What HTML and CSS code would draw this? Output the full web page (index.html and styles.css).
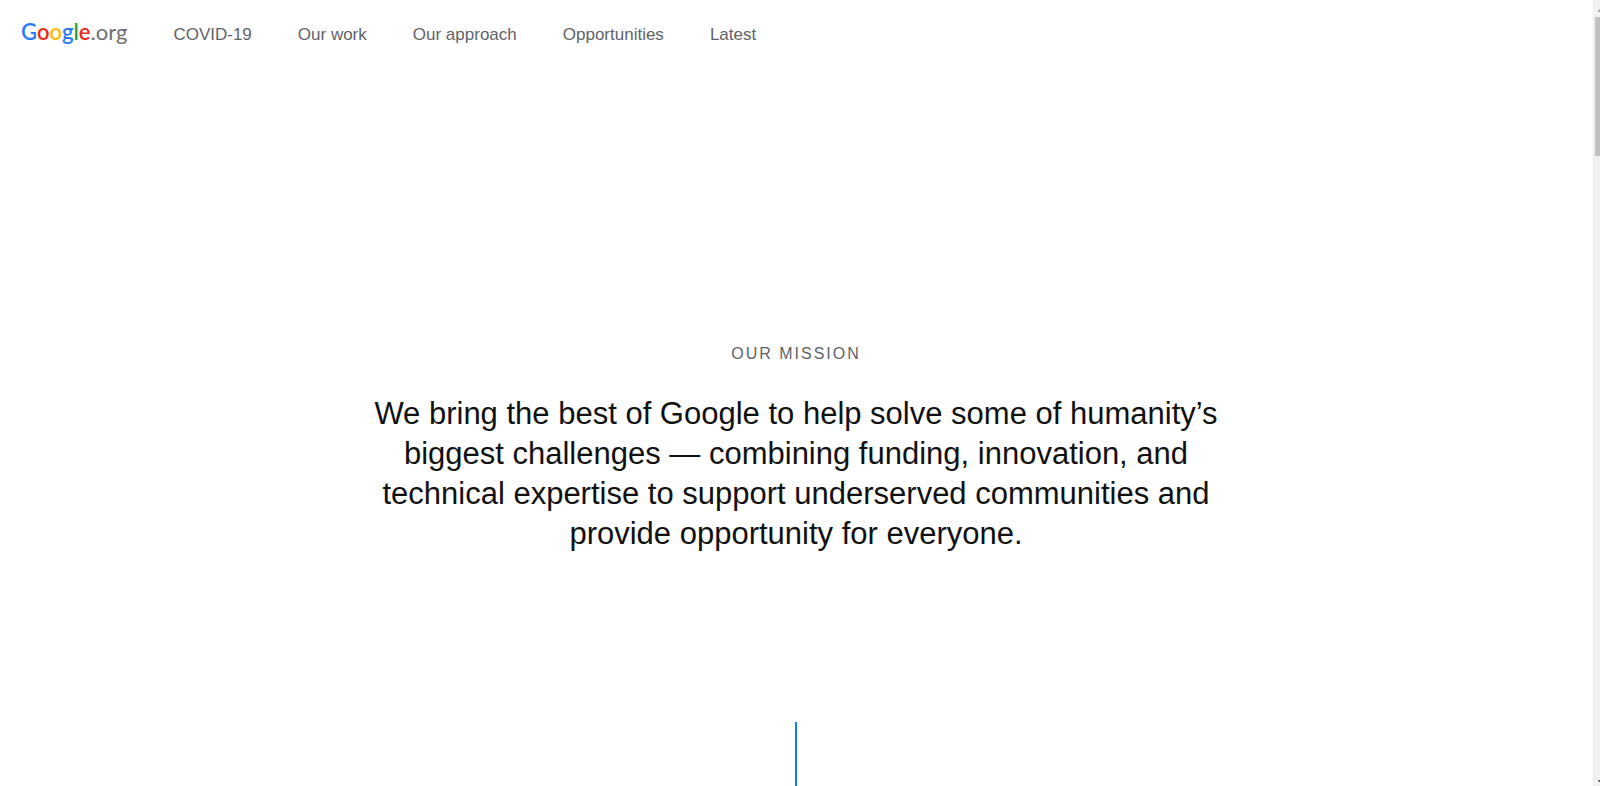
FILE: index.html
```
<!DOCTYPE html>
<html lang="en">
<head>
    <meta charset="UTF-8">
    <meta name="viewport" content="width=device-width, initial-scale=1.0">
    <title>Google.org</title>
    <link rel="stylesheet" href="styles.css">
</head>
<body>
    <div class="page">
        <header class="header">
            <a class="logo" href="#"><b><span class="blue">G</span><span class="red">o</span><span class="yellow">o</span><span class="blue">g</span><span class="green">l</span><span class="red">e</span></b>.org</a>
            <nav class="nav">
                <a href="#">COVID-19</a>
                <a href="#">Our work</a>
                <a href="#">Our approach</a>
                <a href="#">Opportunities</a>
                <a href="#">Latest</a>
            </nav>
        </header>
        <main class="mission">
            <h2 class="eyebrow">Our mission</h2>
            <p class="headline">We bring the best of Google to help solve some of humanity’s biggest challenges — combining funding, innovation, and technical expertise to support underserved communities and provide opportunity for everyone.</p>
            <div class="line"></div>
        </main>
    </div>

    <!-- scrollbar -->
    <div class="scrollbar">
        <svg width="5" height="17" viewBox="0 0 5 17"><path d="M5 9v3H3v-1z" fill="#a3a3a3"/></svg>
        <div class="thumb"></div>
        <svg class="down" width="5" height="17" viewBox="0 0 5 17"><path d="M3 11h2v2H4z" fill="#505050"/></svg>
    </div>
</body>
</html>
```
FILE: styles.css
```
body{
    margin: 0;
    display: flex;
    height: 100vh;
    overflow: hidden;
    background-color: #fff;
    font-family: "Liberation Sans", Arial, sans-serif;
}
a{
    text-decoration: none;
}
.page{
    flex: 1;
    display: flex;
    flex-direction: column;
}
.header{
    display: flex;
    align-items: center;
    height: 70px;
    padding: 0 21px;
    gap: 46px;
}
.logo{
    color: #6d6e71;
    font-family: Lato, sans-serif;
    font-size: 22px;
    line-height: 32px;
    padding-bottom: 6px;
}
.logo b{
    font-weight: 600;
}
.blue{
    color: #2a7bf6;
}
.red{
    color: #ea2a1c;
}
.yellow{
    color: #fbbc05;
}
.green{
    color: #22a64a;
}
.nav{
    display: flex;
    gap: 46px;
}
.nav a{
    color: #5f6368;
    font-size: 17px;
    line-height: 24px;
}
.mission{
    flex: 1;
    display: flex;
    flex-direction: column;
    align-items: center;
    padding-top: 272px;
    text-align: center;
}
.eyebrow{
    margin: 0 0 28px;
    color: #5f6368;
    font-size: 16px;
    font-weight: normal;
    line-height: 24px;
    letter-spacing: 2px;
    text-transform: uppercase;
}
.headline{
    margin: 0;
    max-width: 860px;
    color: #111;
    font-size: 31px;
    line-height: 40px;
}
.line{
    flex: 1;
    width: 2px;
    margin-top: 168px;
    background-color: #0f7bf5;
}
.scrollbar{
    display: flex;
    flex-direction: column;
    box-sizing: border-box;
    width: 8px;
    padding-left: 2px;
    border-left: 1px solid #fafafa;
    background-color: #f1f1f1;
}
.thumb{
    height: 139px;
    background-color: #c1c1c1;
}
.down{
    margin-top: auto;
}
```
